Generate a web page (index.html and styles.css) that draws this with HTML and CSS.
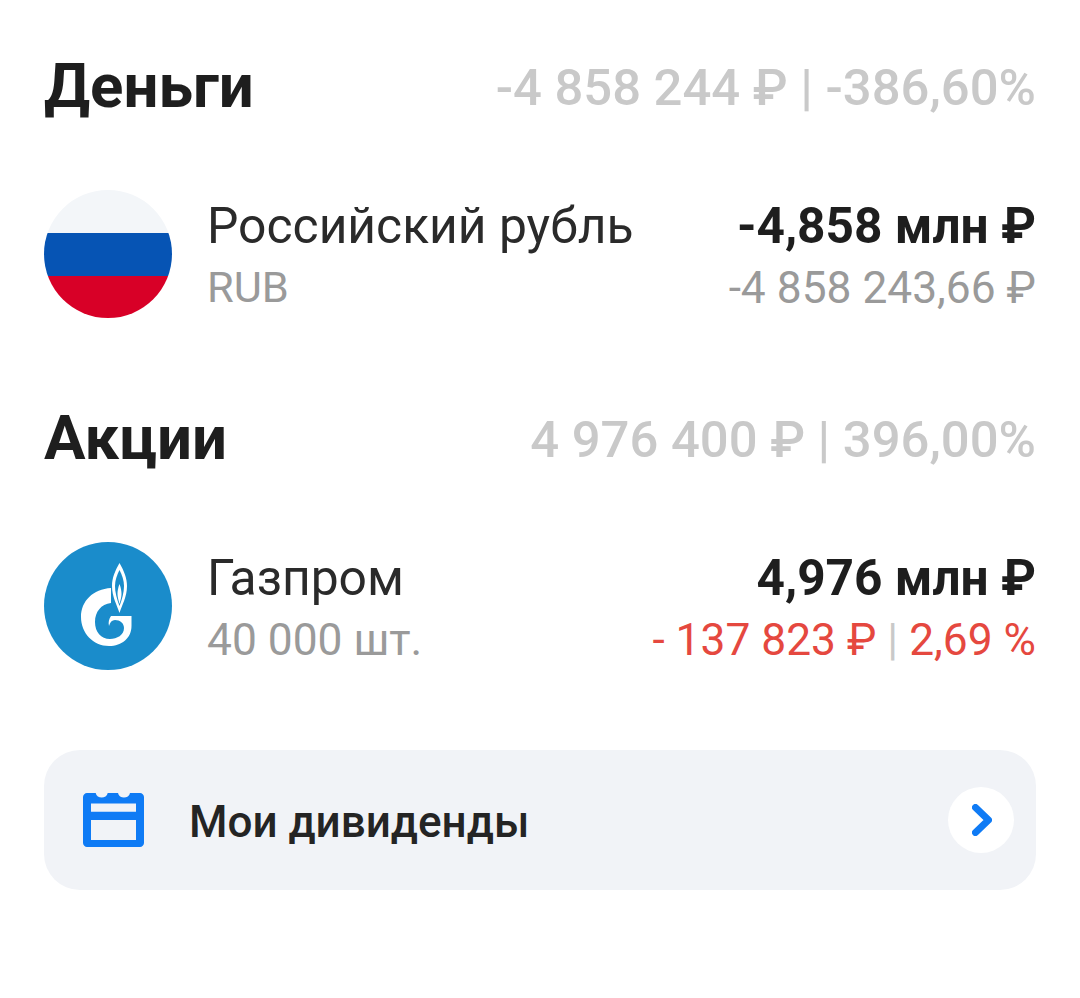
FILE: index.html
```html
<!DOCTYPE html>
<html lang="ru">
<head>
<meta charset="utf-8">
<title>Портфель</title>
<link rel="stylesheet" href="styles.css">
</head>
<body>
<main class="page">
  <section class="head">
    <h2 class="title">Деньги</h2>
    <div class="total">-4 858 244 ₽ | -386,60%</div>
  </section>
  <section class="row">
    <svg class="logo" viewBox="0 0 128 128">
      <defs><clipPath id="c1"><circle cx="64" cy="64" r="64"/></clipPath></defs>
      <g clip-path="url(#c1)">
        <rect width="128" height="43" fill="#f3f6f9"/>
        <rect y="43" width="128" height="43" fill="#0654b4"/>
        <rect y="86" width="128" height="42" fill="#d80027"/>
      </g>
    </svg>
    <div class="info">
      <div class="name">Российский рубль</div>
      <div class="sub code">RUB</div>
    </div>
    <div class="vals">
      <div class="amount">-4,858 млн ₽</div>
      <div class="sub">-4 858 243,66 ₽</div>
    </div>
  </section>
  <section class="head head-second">
    <h2 class="title">Акции</h2>
    <div class="total">4 976 400 ₽ | 396,00%</div>
  </section>
  <section class="row">
    <svg class="logo" viewBox="0 0 128 128">
      <circle cx="64" cy="64" r="64" fill="#1a8ccb"/>
      <path fill="#fff" d="M67 46C49 47 37 59 37 75C37 91 49 104 65 104C78 104 87.5 96 87.5 84V74H67C65 77 64 80 65 84C66 80 68 78 71 78C76 78 80 81 80 86C80 93 73 97 66 97C57 97 51 90 51 80C51 70 57 62 67 61Z"/>
      <path fill="#fff" d="M75.5 21C71 29 68 36 68 44C68 55 73 63 75.5 71C78 63 83 55 83 44C83 36 80 29 75.5 21Z"/>
      <path fill="#1a8ccb" d="M75.5 28C73 33 71 38 71 44C71 51 73 57 75.5 64C78 57 80 51 80 44C80 38 78 33 75.5 28Z"/>
      <path fill="#fff" d="M75.5 42C74 46 73.5 49 73.5 52C73.5 55 74.5 58 75.5 62C76.5 58 77.5 55 77.5 52C77.5 49 77 46 75.5 42Z"/>
    </svg>
    <div class="info">
      <div class="name">Газпром</div>
      <div class="sub">40 000 шт.</div>
    </div>
    <div class="vals">
      <div class="amount">4,976 млн ₽</div>
      <div class="loss">- 137 823 ₽ <span class="sep">|</span> 2,69 %</div>
    </div>
  </section>
  <section class="card">
    <svg class="cal" viewBox="0 0 61 54">
      <path fill="#0f7bf5" fill-rule="evenodd" d="M4 0H12.7C13.7 6 23.7 6 24.7 0H35C36 6 46 6 47 0H57C59 0 61 2 61 4V50C61 52 59 54 57 54H4C2 54 0 52 0 50V4C0 2 2 0 4 0ZM8 10.5V18.7H53V10.5ZM8 27V47H53V27Z"/>
    </svg>
    <div class="card-label">Мои дивиденды</div>
    <div class="go">
      <svg class="chev" viewBox="0 0 20 32">
        <path d="M3.5 3.5L16.5 16L3.5 28.5" fill="none" stroke="#0f7bf5" stroke-width="7" stroke-linecap="round" stroke-linejoin="round"/>
      </svg>
    </div>
  </section>
</main>
</body>
</html>
```
FILE: styles.css
```css
* { box-sizing: border-box; }
html, body { margin: 0; padding: 0; background: #fff; }
body { font-family: Roboto, "Noto Sans", sans-serif; color: #1e1e1e; }
.page { width: 1080px; height: 998px; padding: 54px 44px 0; display: flex; flex-direction: column; }
.head { display: flex; justify-content: space-between; align-items: center; height: 64px; }
.head-second { margin-top: 88px; }
.title { margin: 0; font-size: 61.8px; font-weight: 700; line-height: 64px; }
.total { font-size: 50.8px; font-weight: 500; color: #c9c9c9; line-height: 64px; padding-top: 4px; }
.row { display: flex; align-items: center; height: 128px; margin-top: 72px; }
.logo { width: 128px; height: 128px; flex: none; }
.info { margin-left: 35px; display: flex; flex-direction: column; gap: 10px; flex: 1; padding-top: 6px; }
.vals { display: flex; flex-direction: column; gap: 10px; align-items: flex-end; padding-top: 6px; }
.name { font-size: 49.8px; line-height: 52px; color: #2a2a2a; }
.sub { font-size: 44.3px; line-height: 52px; color: #9a9a9a; }
.code { font-size: 43.4px; }
.amount { font-size: 49.6px; font-weight: 700; line-height: 52px; }
.loss { font-size: 44.3px; line-height: 52px; color: #e5483f; }
.sep { color: #c9c9c9; }
.card { margin-top: 80px; height: 140px; border-radius: 36px; background: #f1f3f7; display: flex; align-items: center; padding: 0 22px 0 39px; }
.cal { width: 61px; height: 54px; flex: none; }
.card-label { margin-left: 45px; flex: 1; font-size: 44px; font-weight: 500; color: #242424; padding-top: 3px; }
.go { width: 66px; height: 66px; border-radius: 50%; background: #fff; display: flex; align-items: center; justify-content: center; }
.chev { width: 20px; height: 32px; margin-left: 2px; }
```
